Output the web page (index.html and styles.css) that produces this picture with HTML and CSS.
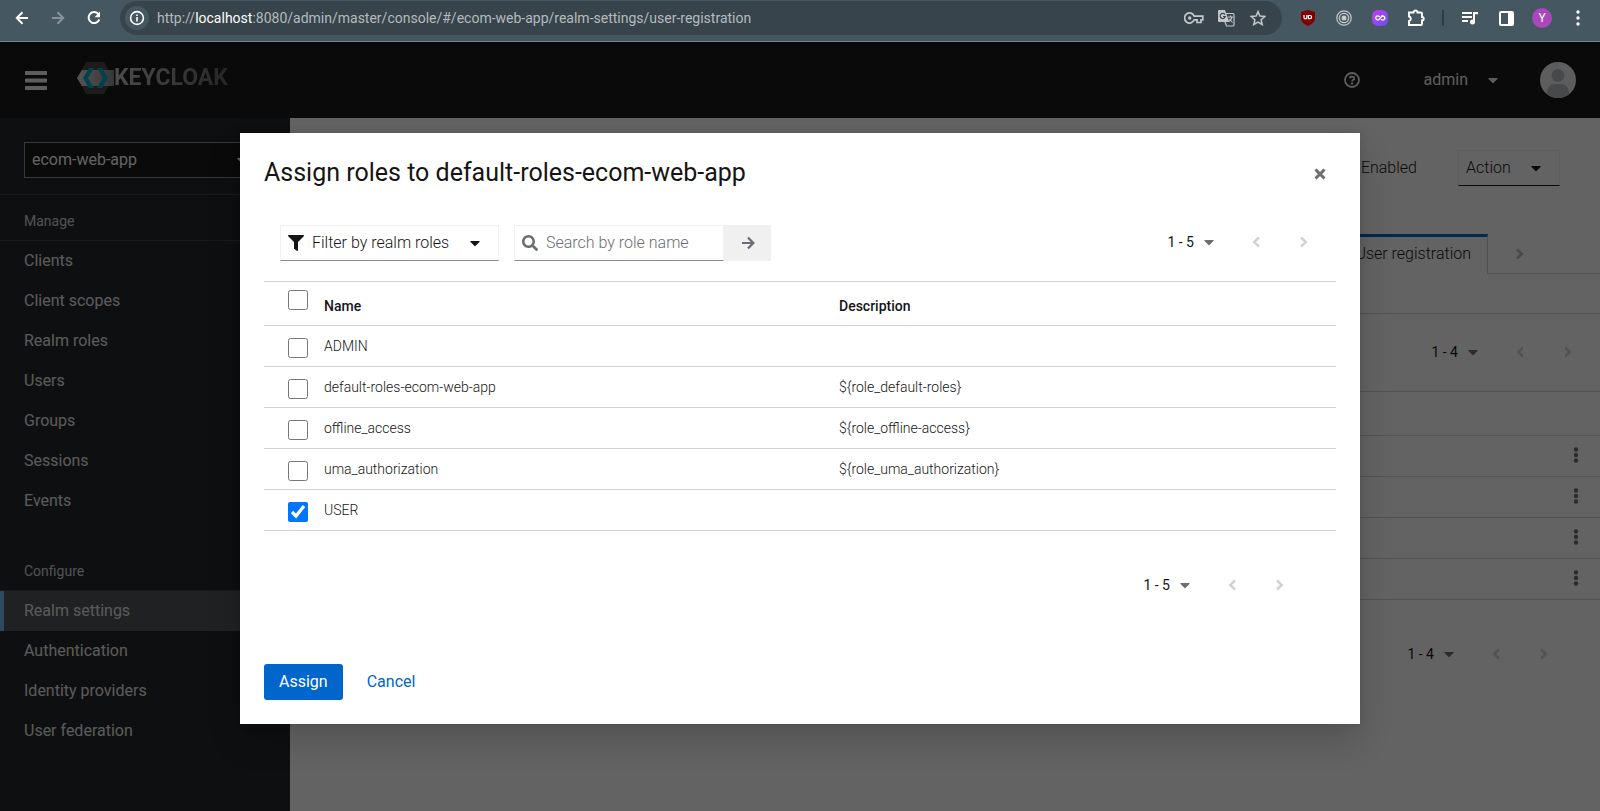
FILE: index.html
```html
<!DOCTYPE html>
<html lang="en">
<head>
<meta charset="utf-8">
<title>Keycloak Administration Console</title>
<link rel="stylesheet" href="styles.css">
</head>
<body>
<svg class="sprite" aria-hidden="true">
  <symbol id="caret" viewBox="0 0 320 512"><path d="M31.3 192h257.3c17.800 0 26.700 21.500 14.100 34.100L174.100 354.800c-7.800 7.800-20.500 7.800-28.300 0L17.200 226.100C4.600 213.500 13.500 192 31.300 192z"/></symbol>
  <symbol id="left" viewBox="0 0 10 12"><path d="M8 1.500 3.200 6 8 10.500" fill="none" stroke="currentColor" stroke-width="2.400"/></symbol>
  <symbol id="right" viewBox="0 0 10 12"><path d="M2 1.500 6.800 6 2 10.500" fill="none" stroke="currentColor" stroke-width="2.400"/></symbol>
  <symbol id="kebab" viewBox="0 0 6 16"><circle cx="3" cy="2.500" r="2.200"/><circle cx="3" cy="8" r="2.200"/><circle cx="3" cy="13.500" r="2.200"/></symbol>
</svg>

<div class="chrome">
  <button class="tool" aria-label="Back"><svg width="14" height="14" viewBox="0 0 14 14"><path d="M13 7H2M7.500 1.300 1.800 7l5.700 5.700" fill="none" stroke="currentColor" stroke-width="2"/></svg></button>
  <button class="tool dim" aria-label="Forward"><svg width="14" height="14" viewBox="0 0 14 14"><path d="M1 7h11M6.500 1.300 12.200 7l-5.700 5.700" fill="none" stroke="currentColor" stroke-width="2"/></svg></button>
  <button class="tool" aria-label="Reload"><svg width="14" height="14" viewBox="0 0 14 14"><path d="M11.300 3A5.500 5.500 0 1 0 12.300 8.400" fill="none" stroke="currentColor" stroke-width="2"/><path d="M13 .6v5.600H7.600z"/></svg></button>
  <div class="omnibox">
    <span class="site-info"><svg width="16" height="16" viewBox="0 0 16 16"><circle cx="8" cy="8" r="6.400" fill="none" stroke="currentColor" stroke-width="1.600"/><path d="M7.200 7h1.600v4.500H7.200zM7.200 4.400h1.600V6H7.200z"/></svg></span>
    <span class="url">http://<b>localhost</b>:8080/admin/master/console/#/ecom-web-app/realm-settings/user-registration</span>
    <button class="inner" aria-label="Passwords"><svg width="20" height="12" viewBox="0 0 20 12"><path d="M10.200 4.200A5 5 0 1 0 10.200 7.800H13V10.500h4V7.800h1.800V4.200z" fill="none" stroke="currentColor" stroke-width="1.700"/><circle cx="5.700" cy="6" r="1.700"/></svg></button>
    <button class="inner" aria-label="Translate"><svg width="18" height="18" viewBox="0 0 18 18"><path d="M9 4.500h7a1 1 0 0 1 1 1V16a1 1 0 0 1-1 1H9.500L8 13" fill="none" stroke="currentColor" stroke-width="1.200"/><path d="M2 1h6l4.300 12H2a1 1 0 0 1-1-1V2a1 1 0 0 1 1-1z"/><path d="M8 5.600A2.600 2.600 0 1 0 8.300 7.500H6" fill="none" stroke="#38444b" stroke-width="1.200"/><path d="M11 8h5M13.500 6.500V8m1.500 0c-.5 2-2 3.500-3 4.300M12.500 10l3 3.500" fill="none" stroke="currentColor" stroke-width="1.100"/></svg></button>
    <button class="inner" aria-label="Bookmark"><svg width="16" height="16" viewBox="0 0 16 16"><path d="m8 1.600 1.900 4.500 4.900.4-3.700 3.200 1.100 4.800L8 12l-4.200 2.500 1.100-4.800L1.200 6.500l4.900-.4z" fill="none" stroke="currentColor" stroke-width="1.500"/></svg></button>
  </div>
  <button class="tool" aria-label="uBlock Origin"><svg width="14" height="16" viewBox="0 0 14 16"><path d="M7 0 0 2v6c0 4 3 6 7 8 4-2 7-4 7-8V2z" fill="#800000"/><path d="M3 5v2.400a1.400 1.400 0 0 0 2.800 0V5M7.400 5.500H9a1.600 1.600 0 0 1 0 3.200H7.400z" fill="none" stroke="#fff" stroke-width="1.200"/></svg></button>
  <button class="tool soft" aria-label="Recorder"><svg width="16" height="16" viewBox="0 0 16 16"><g fill="none" stroke="currentColor" stroke-width="1.200"><circle cx="8" cy="8" r="7.200"/><circle cx="8" cy="8" r="4.700"/></g><circle cx="8" cy="8" r="2.500"/></svg></button>
  <button class="tool" aria-label="Extension"><svg width="16" height="16" viewBox="0 0 16 16"><defs><linearGradient id="violet" x2="1" y2="1"><stop stop-color="#c040f0"/><stop offset="1" stop-color="#6a4cf5"/></linearGradient></defs><rect width="16" height="16" rx="6" fill="url(#violet)"/><path d="M7.600 7.200A2 2 0 1 0 7 9.400l3-3.200a2 2 0 1 1-.9 2.900M9 6.500 11 5.200" fill="none" stroke="#fff" stroke-width="1.300"/></svg></button>
  <button class="tool" aria-label="Extensions"><svg width="18" height="18" viewBox="0 0 18 18"><path d="M2 3.500h4.500a2 2 0 0 1 4 0H14a1 1 0 0 1 1 1V8a1.700 1.700 0 0 1 0 3.400V15a1 1 0 0 1-1 1H2v-4a2.300 2.300 0 0 0 0-4.500z" fill="none" stroke="currentColor" stroke-width="1.900"/></svg></button>
  <span class="divider"></span>
  <button class="tool" aria-label="Media"><svg width="16" height="14" viewBox="0 0 16 14"><path d="M0 1h10v2H0zM0 5h10v2H0zM0 9h6v2H0zM11 1h5v2.200h-3V11h-2z"/><circle cx="10.500" cy="11" r="2.500"/></svg></button>
  <button class="tool" aria-label="Side panel"><svg width="15" height="15" viewBox="0 0 15 15"><path d="M2 0h11a2 2 0 0 1 2 2v11a2 2 0 0 1-2 2H2a2 2 0 0 1-2-2V2a2 2 0 0 1 2-2zm0 2v11h7V2z" fill-rule="evenodd"/></svg></button>
  <button class="tool" aria-label="Profile"><span class="profile">Y</span></button>
  <button class="tool" aria-label="Menu"><svg width="4" height="16" viewBox="0 0 4 16"><circle cx="2" cy="2" r="1.700"/><circle cx="2" cy="8" r="1.700"/><circle cx="2" cy="14" r="1.700"/></svg></button>
</div>

<div class="app">
  <header class="masthead">
    <button class="burger" aria-label="Toggle navigation"><svg width="22" height="19" viewBox="0 0 22 19"><path d="M1 0h20a1 1 0 0 1 0 4H1a1 1 0 0 1 0-4zM1 7.500h20a1 1 0 0 1 0 4H1a1 1 0 0 1 0-4zM1 15h20a1 1 0 0 1 0 4H1a1 1 0 0 1 0-4z"/></svg></button>
    <a class="logo" href="#" aria-label="Keycloak">
      <svg width="37" height="32" viewBox="0 0 37 32"><defs><linearGradient id="band" x2="1"><stop stop-color="#d8d8d8"/><stop offset="1" stop-color="#8a8a8a"/></linearGradient></defs><path d="M9 0h18l9 16-9 16H9L0 16z" fill="#444"/><path d="M5 8h32v16H5L0 16z" fill="url(#band)"/><path d="M12 6h5l-6 10 6 10h-5L6 16z" fill="#00a8c6"/><path d="M20 6h5l6 10-6 10h-5l6-10z" fill="#00a8c6"/></svg>
      <span class="wordmark">KEYCLOAK</span>
    </a>
    <button class="help" aria-label="Help"><svg width="16" height="16" viewBox="0 0 16 16"><circle cx="8" cy="8" r="7" fill="none" stroke="currentColor" stroke-width="1.800"/><path d="M5.800 6.400c.2-2.600 4.600-2.400 4.500 0 0 1.500-2.100 1.400-2.200 3" fill="none" stroke="currentColor" stroke-width="1.800"/><circle cx="8.100" cy="11.400" r="1.200"/></svg></button>
    <button class="user">admin <svg class="caret"><use href="#caret"/></svg></button>
    <svg class="avatar" viewBox="0 0 36 36"><defs><clipPath id="round"><circle cx="18" cy="18" r="18"/></clipPath></defs><circle cx="18" cy="18" r="18" fill="#f0f0f0"/><g clip-path="url(#round)" fill="#b8bbbe"><circle cx="18" cy="13.500" r="6.500"/><path d="M7 36V30q1-8 8-8h6q7 0 8 8v6z"/></g></svg>
  </header>

  <div class="body">
    <nav class="sidebar" aria-label="Realm">
      <div class="realm"><button class="realm-select">ecom-web-app <svg class="caret"><use href="#caret"/></svg></button></div>
      <section class="nav-group">
        <h2>Manage</h2>
        <ul>
          <li><a href="#">Clients</a></li>
          <li><a href="#">Client scopes</a></li>
          <li><a href="#">Realm roles</a></li>
          <li><a href="#">Users</a></li>
          <li><a href="#">Groups</a></li>
          <li><a href="#">Sessions</a></li>
          <li><a href="#">Events</a></li>
        </ul>
      </section>
      <section class="nav-group">
        <h2>Configure</h2>
        <ul>
          <li><a href="#" class="current" aria-current="page">Realm settings</a></li>
          <li><a href="#">Authentication</a></li>
          <li><a href="#">Identity providers</a></li>
          <li><a href="#">User federation</a></li>
        </ul>
      </section>
    </nav>

    <main class="content">
      <div class="page-head"><span>Enabled</span><button class="action">Action <svg class="caret"><use href="#caret"/></svg></button></div>
      <div class="tabs"><button class="tab">User registration</button><button class="tab-scroll" aria-label="Scroll right"><svg class="chev"><use href="#right"/></svg></button></div>
      <div class="pager page-pager"><button class="range">1 - 4 <svg class="caret"><use href="#caret"/></svg></button><button class="step" aria-label="Previous"><svg class="chev"><use href="#left"/></svg></button><button class="step" aria-label="Next"><svg class="chev"><use href="#right"/></svg></button></div>
      <ul class="rows">
        <li class="rows-head"></li>
        <li><button aria-label="Row actions"><svg><use href="#kebab"/></svg></button></li>
        <li><button aria-label="Row actions"><svg><use href="#kebab"/></svg></button></li>
        <li><button aria-label="Row actions"><svg><use href="#kebab"/></svg></button></li>
        <li><button aria-label="Row actions"><svg><use href="#kebab"/></svg></button></li>
      </ul>
      <div class="pager foot-pager"><button class="range">1 - 4 <svg class="caret"><use href="#caret"/></svg></button><button class="step" aria-label="Previous"><svg class="chev"><use href="#left"/></svg></button><button class="step" aria-label="Next"><svg class="chev"><use href="#right"/></svg></button></div>
    </main>
  </div>

  <div class="backdrop">
    <div class="modal" role="dialog" aria-modal="true" aria-labelledby="title">
      <div class="modal-head">
        <h1 id="title">Assign roles to default-roles-ecom-web-app</h1>
        <button class="close" aria-label="Close"><svg width="12" height="12" viewBox="0 0 12 12"><path d="m1.500 1.500 9 9m0-9-9 9" stroke="currentColor" stroke-width="3"/></svg></button>
      </div>
      <div class="toolbar">
        <button class="filter"><svg width="16" height="16" viewBox="0 0 512 512"><path d="M488 0H24C2.700 0-8 25.900 7.100 41L192 225.900V432c0 7.800 3.800 15.200 10.200 19.700l80 56c15.800 11 37.800-.2 37.800-19.700V225.900L504.900 41C520 25.900 509.300 0 488 0z"/></svg><span>Filter by realm roles</span><svg class="caret"><use href="#caret"/></svg></button>
        <div class="search">
          <label class="search-box"><svg width="16" height="16" viewBox="0 0 512 512"><path d="M505 442.700 405.300 343c-4.500-4.500-10.600-7-17-7H372c27.600-35.300 44-79.700 44-128C416 93.100 322.900 0 208 0S0 93.100 0 208s93.100 208 208 208c48.300 0 92.700-16.400 128-44v16.300c0 6.400 2.500 12.500 7 17l99.700 99.700c9.400 9.400 24.600 9.400 33.900 0l28.300-28.300c9.400-9.400 9.400-24.600.1-34zM208 336c-70.700 0-128-57.200-128-128 0-70.700 57.200-128 128-128 70.700 0 128 57.200 128 128 0 70.700-57.200 128-128 128z"/></svg><input type="text" placeholder="Search by role name" aria-label="Search by role name"></label>
          <button class="go" aria-label="Search"><svg width="14" height="14" viewBox="0 0 14 14"><path d="M1 7h11M7 1.600 12.400 7 7 12.400" fill="none" stroke="currentColor" stroke-width="2.200"/></svg></button>
        </div>
        <div class="pager"><button class="range">1 - 5 <svg class="caret"><use href="#caret"/></svg></button><button class="step" aria-label="Previous"><svg class="chev"><use href="#left"/></svg></button><button class="step" aria-label="Next"><svg class="chev"><use href="#right"/></svg></button></div>
      </div>
      <table class="roles">
        <thead><tr><th class="pick"><input type="checkbox" aria-label="Select all"></th><th class="name">Name</th><th>Description</th></tr></thead>
        <tbody>
          <tr><td class="pick"><input type="checkbox" id="r1"></td><td><label for="r1">ADMIN</label></td><td></td></tr>
          <tr><td class="pick"><input type="checkbox" id="r2"></td><td><label for="r2">default-roles-ecom-web-app</label></td><td>${role_default-roles}</td></tr>
          <tr><td class="pick"><input type="checkbox" id="r3"></td><td><label for="r3">offline_access</label></td><td>${role_offline-access}</td></tr>
          <tr><td class="pick"><input type="checkbox" id="r4"></td><td><label for="r4">uma_authorization</label></td><td>${role_uma_authorization}</td></tr>
          <tr><td class="pick"><input type="checkbox" id="r5" checked></td><td><label for="r5">USER</label></td><td></td></tr>
        </tbody>
      </table>
      <div class="pager modal-pager"><button class="range">1 - 5 <svg class="caret"><use href="#caret"/></svg></button><button class="step" aria-label="Previous"><svg class="chev"><use href="#left"/></svg></button><button class="step" aria-label="Next"><svg class="chev"><use href="#right"/></svg></button></div>
      <div class="modal-foot"><button class="primary">Assign</button><button class="link">Cancel</button></div>
    </div>
  </div>
</div>
</body>
</html>
```

FILE: styles.css
```css
*, *::before, *::after { box-sizing: border-box; }
html, body { height: 100%; }
body {
  margin: 0;
  display: flex;
  flex-direction: column;
  font: 16px/24px Roboto, "Noto Sans", sans-serif;
  color: #151515;
  overflow: hidden;
}
button, input { font: inherit; color: inherit; }
button { border: 0; background: none; padding: 0; }
svg { fill: currentColor; display: block; flex: none; }
h1, h2, ul { margin: 0; padding: 0; font-weight: 400; }
ul { list-style: none; }
a { color: inherit; text-decoration: none; }
.sprite { display: none; }
.caret { width: 10px; height: 16px; }
.chev { width: 10px; height: 12px; }

/* Browser bar */
.chrome {
  display: flex;
  align-items: center;
  flex: none;
  height: 42px;
  padding: 0 4px 5px;
  background: #455761;
  border-bottom: 1px solid #768184;
  color: #fff;
}
.tool { width: 36px; height: 34px; display: grid; place-items: center; }
.dim { color: #87939a; }
.soft { color: #c8cccf; }
.omnibox {
  flex: 1;
  display: flex;
  align-items: center;
  height: 34px;
  margin: 0 8px;
  padding: 0 8px 0 5px;
  border-radius: 17px;
  background: #38444b;
  color: #c4c7c9;
}
.site-info {
  display: grid;
  place-items: center;
  width: 24px;
  height: 24px;
  border-radius: 50%;
  background: #455761;
  color: #fff;
}
.url { flex: 1; padding-left: 8px; font-size: 14px; line-height: 20px; color: #b4babd; }
.url b { font-weight: 400; color: #fff; }
.inner { width: 32px; height: 32px; display: grid; place-items: center; }
.divider { width: 2px; height: 16px; margin: 0 8px; background: #303c43; }
.profile {
  width: 20px;
  height: 20px;
  border-radius: 50%;
  background: #ab47bc;
  font-size: 12px;
  line-height: 20px;
  text-align: center;
}

/* Console header */
.app { position: relative; flex: 1; display: flex; flex-direction: column; }
.masthead {
  display: flex;
  align-items: center;
  flex: none;
  height: 76px;
  padding: 0 24px 0 25px;
  background: #151515;
  color: #f0f0f0;
}
.logo { display: flex; align-items: center; margin: 0 auto 4px 30px; }
.wordmark {
  font: 700 23px/32px Roboto, sans-serif;
  background: linear-gradient(90deg, #c4c4c4, #606060);
  background-clip: text;
  color: transparent;
}
.help { margin-right: 64px; }
.user { display: flex; align-items: center; gap: 20px; margin-right: 42px; }
.avatar { width: 36px; height: 36px; }

.body { flex: 1; display: flex; min-height: 0; }
.sidebar { width: 290px; flex: none; background: #212427; color: #fff; }
.realm { padding: 24px 24px 16px; border-bottom: 1px solid #3c3f42; }
.realm-select {
  display: flex;
  align-items: center;
  justify-content: space-between;
  width: 100%;
  height: 36px;
  padding: 0 18px 0 7px;
  border: 1px solid #8a8d90;
  background: #151515;
}
.nav-group h2 { padding: 16px 24px 8px; font-size: 14px; line-height: 21px; border-bottom: 1px solid #3c3f42; color: #d2d2d2; }
.nav-group + .nav-group { padding-top: 24px; }
.nav-group a { display: block; height: 40px; padding: 8px 24px; color: #e8e8e8; }
.nav-group .current { background: #4f5255; box-shadow: inset 4px 0 #73bcf7; }

.content { flex: 1; background: #fff; }
.page-head { display: flex; justify-content: flex-end; align-items: center; gap: 41px; padding: 32px 40px 0 0; font-weight: 300; }
.action {
  display: flex;
  align-items: center;
  justify-content: space-between;
  width: 102px;
  height: 36px;
  padding: 0 18px 0 7px;
  border: 1px solid #f0f0f0;
  border-bottom-color: #151515;
}
.tabs { display: flex; justify-content: flex-end; margin-top: 48px; height: 40px; }
.tab { padding: 0 16px 4px; border-top: 3px solid #06c; border-right: 1px solid #d2d2d2; font-weight: 300; }
.tab-scroll { width: 112px; padding-left: 27px; border-bottom: 1px solid #d2d2d2; color: #b8bbbe; }
.page-pager { margin-top: 39px; height: 78px; padding: 0 8px 2px 0; border-top: 1px solid #d2d2d2; }
.rows { border-top: 1px solid #d2d2d2; }
.rows li { display: flex; align-items: center; justify-content: flex-end; height: 41px; padding: 0 21px 2px 0; border-bottom: 1px solid #d2d2d2; }
.rows .rows-head { height: 44px; }
.rows svg { width: 6px; height: 16px; color: #6a6e73; }
.foot-pager { padding: 36px 32px 0 0; }

.pager { display: flex; justify-content: flex-end; align-items: center; font-size: 14px; }
.range { display: flex; align-items: center; gap: 10px; margin-right: 18px; }
.range .caret { color: #6a6e73; }
.step { width: 48px; height: 36px; display: grid; place-items: center; color: #d2d2d2; }

/* Dialog */
.backdrop {
  position: absolute;
  inset: 0;
  display: flex;
  align-items: center;
  justify-content: center;
  padding: 4px 24px 0;
  background: rgba(3, 3, 3, .62);
}
.modal {
  width: 1120px;
  max-width: 100%;
  padding: 24px;
  background: #fff;
  box-shadow: 0 16px 32px rgba(3, 3, 3, .16), 0 0 8px rgba(3, 3, 3, .1);
}
.modal-head { display: flex; justify-content: space-between; align-items: center; padding-right: 10px; }
.modal-head h1 { font-size: 25px; line-height: 32px; }
.close { padding-top: 2px; color: #6a6e73; }
.toolbar { display: flex; gap: 15px; padding: 36px 8px 20px 16px; }
.toolbar .pager { margin-left: auto; padding-bottom: 2px; }
.toolbar .step { height: 34px; }
.filter {
  display: flex;
  align-items: center;
  width: 219px;
  height: 36px;
  padding: 0 18px 0 7px;
  border: 1px solid #f0f0f0;
  border-bottom-color: #8a8d90;
  font-weight: 300;
}
.filter span { flex: 1; padding-left: 8px; text-align: left; }
.search { display: flex; }
.search-box {
  display: flex;
  align-items: center;
  gap: 8px;
  width: 210px;
  padding: 0 8px 0 7px;
  border: 1px solid #f0f0f0;
  border-bottom-color: #8a8d90;
  color: #6a6e73;
}
.search-box input { width: 100%; min-width: 0; border: 0; padding: 0; outline: 0; background: none; font-weight: 300; }
.search-box input::placeholder { color: #6a6e73; opacity: 1; }
.go { width: 47px; display: grid; place-items: center; background: #f0f0f0; color: #6a6e73; }

.roles { width: 100%; border-collapse: collapse; table-layout: fixed; font-size: 14px; line-height: 21px; border-top: 1px solid #d2d2d2; }
.roles tr { height: 41px; border-bottom: 1px solid #d2d2d2; }
.roles thead tr { height: 44px; }
.roles th, .roles td { padding: 0; text-align: left; font-weight: 300; }
.roles th { padding-top: 6px; font-weight: 500; }
.roles .pick { width: 60px; padding-left: 24px; }
.roles th.pick { padding-top: 0; padding-bottom: 8px; }
.roles td.pick { padding-top: 3px; }
.roles .name { width: 515px; }
.roles input { display: block; width: 20px; height: 20px; margin: 0; accent-color: #0075ff; }
.modal-pager { padding: 36px 32px 0 0; }
.modal-foot { display: flex; padding-top: 61px; }
.primary { height: 36px; padding: 0 15px; border-radius: 3px; background: #06c; color: #fff; }
.link { padding: 0 24px; color: #06c; }
```
